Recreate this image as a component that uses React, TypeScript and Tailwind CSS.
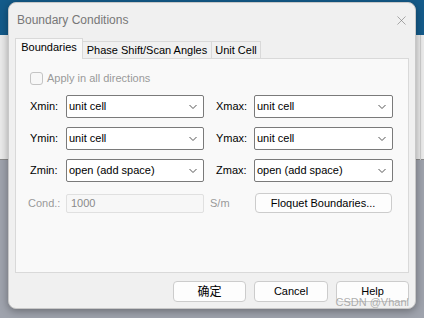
import { X } from 'lucide-react';

const font = { fontFamily: '"Liberation Sans", Arial, "Noto Sans CJK SC", sans-serif' };

function Chevron() {
  return (
    <svg width="10" height="6" viewBox="0 0 10 6" className="shrink-0">
      <path d="M1.5 1 L5 4.5 L8.5 1" fill="none" stroke="#555555" strokeWidth="1" />
    </svg>
  );
}

function Combo({ value, width }: { value: string; width: string }) {
  return (
    <div
      className={`${width} h-[23px] flex items-center justify-between bg-white border border-[#7a7a7a] rounded-[2px] pl-[2px] pr-[5px] text-[11px] text-black`}
    >
      <span>{value}</span>
      <Chevron />
    </div>
  );
}

function Row({ left, leftVal, right, rightVal }: { left: string; leftVal: string; right: string; rightVal: string }) {
  return (
    <div className="flex items-center h-[23px]">
      <span className="w-[36px] text-[11px] text-black">{left}</span>
      <Combo value={leftVal} width="w-[138px]" />
      <span className="ml-[12px] w-[38px] text-[11px] text-black">{right}</span>
      <Combo value={rightVal} width="w-[139px]" />
    </div>
  );
}

export default function App() {
  return (
    <div className="relative w-[424px] h-[318px] overflow-hidden bg-[#9fa3ad]" style={font}>
      {/* desktop behind the dialog */}
      <div className="absolute left-0 top-0 w-full h-[35px] bg-[#145b8a]" />
      <div className="absolute left-0 top-[35px] w-full h-[125px] bg-[#ebebeb] border-b border-[#8a8a8a]" />
      <div className="absolute right-[3px] top-[35px] h-[125px] w-px bg-[#cfcfcf]" />

      {/* dialog window */}
      <div className="absolute left-[8px] top-[2px] w-[408px] h-[307px] bg-[#f0f0f0] rounded-[8px] shadow-[0_2px_8px_rgba(0,0,0,0.35)] border border-[#c8c8c8] flex flex-col">
        <div className="h-[34px] flex items-center justify-between pl-[8px] pr-[6px]">
          <span className="text-[12px] text-[#777777]">Boundary Conditions</span>
          <X size={15} strokeWidth={1} color="#7a7a7a" />
        </div>

        {/* tabs */}
        <div className="flex items-end ml-[6px] h-[21px] text-[11px] text-black whitespace-nowrap">
          <div className="h-[21px] w-[68px] bg-[#f9f9f9] border border-b-0 border-[#d9d9d9] flex items-center justify-center relative z-10 -mb-px pb-[3px]">
            Boundaries
          </div>
          <div className="h-[17px] w-[129px] bg-[#f0f0f0] border border-l-0 border-b-0 border-[#d9d9d9] flex items-center justify-center">
            Phase Shift/Scan Angles
          </div>
          <div className="h-[17px] w-[49px] bg-[#f0f0f0] border border-l-0 border-b-0 border-[#d9d9d9] flex items-center justify-center">
            Unit Cell
          </div>
        </div>

        {/* panel */}
        <div className="mx-[6px] h-[215px] bg-[#f9f9f9] border border-[#d9d9d9] pl-[14px] pt-[13px] flex flex-col">
          <div className="flex items-center gap-[4px] h-[13px]">
            <div className="w-[13px] h-[13px] border border-[#c4c4c4] rounded-[3px] bg-[#f7f7f7]" />
            <span className="text-[11px] text-[#9a9a9a]">Apply in all directions</span>
          </div>
          <div className="flex flex-col gap-[9px] mt-[10px]">
            <Row left="Xmin:" leftVal="unit cell" right="Xmax:" rightVal="unit cell" />
            <Row left="Ymin:" leftVal="unit cell" right="Ymax:" rightVal="unit cell" />
            <Row left="Zmin:" leftVal="open (add space)" right="Zmax:" rightVal="open (add space)" />
          </div>
          <div className="flex items-center mt-[11px] h-[20px] text-[11px]">
            <span className="w-[36px] -ml-[2px] text-[#9a9a9a]">Cond.:</span>
            <div className="ml-[2px] w-[138px] h-[19px] border border-[#e0e0e0] bg-[#f7f7f7] rounded-[2px] pl-[4px] flex items-center text-[#8a8a8a]">
              1000
            </div>
            <span className="ml-[6px] text-[#9a9a9a]">S/m</span>
            <div className="ml-[25px] w-[137px] h-[20px] bg-[#fdfdfd] border border-[#cccccc] rounded-[4px] flex items-center justify-center text-black">
              Floquet Boundaries...
            </div>
          </div>
        </div>

        {/* bottom buttons */}
        <div className="flex justify-end gap-[8px] pr-[6px] mt-[8px] text-[11px] text-black">
          <div className="w-[73px] h-[21px] bg-[#fdfdfd] border border-[#cccccc] rounded-[4px] flex items-center justify-center text-[12px]">确定</div>
          <div className="w-[74px] h-[21px] bg-[#fdfdfd] border border-[#cccccc] rounded-[4px] flex items-center justify-center">Cancel</div>
          <div className="relative w-[73px] h-[21px] bg-[#fdfdfd] border border-[#cccccc] rounded-[4px] flex items-center justify-center">
            Help
            <span className="absolute -right-px top-[12px] text-[11px] leading-[16px] text-[#9a9a9a]/80 whitespace-nowrap">CSDN @Vhanl</span>
          </div>
        </div>
      </div>
    </div>
  );
}
